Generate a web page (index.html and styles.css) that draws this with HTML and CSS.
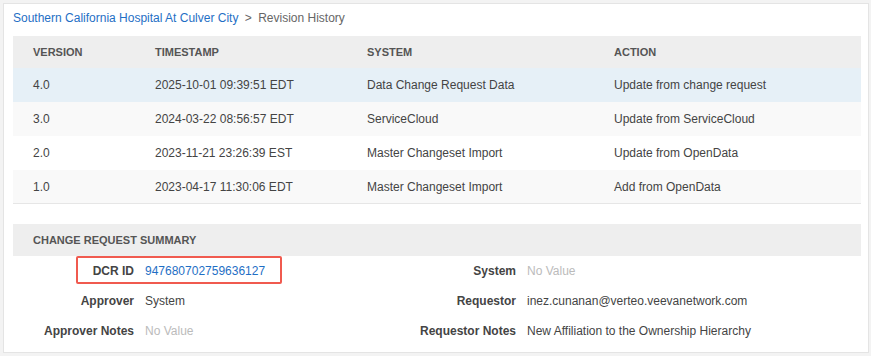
FILE: index.html
```html
<!DOCTYPE html>
<html>
<head>
<meta charset="utf-8">
<link rel="stylesheet" href="styles.css">
</head>
<body>
<div class="card">
  <div class="crumbs">
    <a class="crumb-link" href="#">Southern California Hospital At Culver City</a>
    <span class="crumb-sep">&gt;</span>
    <span class="crumb-current">Revision History</span>
  </div>
  <table class="history">
    <colgroup>
      <col class="c1"><col class="c2"><col class="c3"><col class="c4">
    </colgroup>
    <thead>
      <tr><th>VERSION</th><th>TIMESTAMP</th><th>SYSTEM</th><th>ACTION</th></tr>
    </thead>
    <tbody>
      <tr class="selected"><td>4.0</td><td>2025-10-01 09:39:51 EDT</td><td>Data Change Request Data</td><td>Update from change request</td></tr>
      <tr class="alt"><td>3.0</td><td>2024-03-22 08:56:57 EDT</td><td>ServiceCloud</td><td>Update from ServiceCloud</td></tr>
      <tr><td>2.0</td><td>2023-11-21 23:26:39 EST</td><td>Master Changeset Import</td><td>Update from OpenData</td></tr>
      <tr class="alt last"><td>1.0</td><td>2023-04-17 11:30:06 EDT</td><td>Master Changeset Import</td><td>Add from OpenData</td></tr>
    </tbody>
  </table>
  <section class="summary">
    <div class="summary-head">CHANGE REQUEST SUMMARY</div>
    <div class="summary-grid">
      <div class="label">DCR ID</div><div class="value"><a class="link" href="#">947680702759636127</a></div>
      <div class="label">System</div><div class="value empty">No Value</div>
      <div class="label">Approver</div><div class="value">System</div>
      <div class="label">Requestor</div><div class="value">inez.cunanan@verteo.veevanetwork.com</div>
      <div class="label">Approver Notes</div><div class="value empty">No Value</div>
      <div class="label">Requestor Notes</div><div class="value">New Affiliation to the Ownership Hierarchy</div>
    </div>
    <div class="highlight-box"></div>
  </section>
</div>
</body>
</html>
```
FILE: styles.css
```css
html, body {
  margin: 0;
  padding: 0;
}
body {
  background: #f3f3f3;
  font-family: "Liberation Sans", Arial, Helvetica, sans-serif;
  font-size: 12px;
  color: #444;
  padding: 3px 2px 3px 3px;
  width: 871px;
  height: 356px;
  box-sizing: border-box;
}
.card {
  background: #fff;
  border: 1px solid #e4e4e4;
  width: 866px;
  height: 350px;
  box-sizing: border-box;
  padding: 0 6px 0 9px;
}
.crumbs {
  padding-top: 4px;
  height: 32px;
  line-height: 20px;
  box-sizing: border-box;
  color: #666;
}
.crumb-link {
  color: #1f6fc5;
  text-decoration: none;
}
.crumb-sep {
  margin: 0 3px;
  color: #666;
}
.history {
  width: 848px;
  border-collapse: collapse;
  table-layout: fixed;
}
.c1 { width: 122px; }
.c2 { width: 212px; }
.c3 { width: 247px; }
.c4 { width: 267px; }
.history th {
  background: #eeeeee;
  height: 32px;
  padding: 0 0 0 20px;
  text-align: left;
  font-size: 11px;
  font-weight: bold;
  color: #555;
}
.history td {
  height: 34px;
  padding: 0 0 0 20px;
  color: #444;
}
.history tr.selected td { background: #e6f0f7; }
.history tr.alt td { background: #f9f9f9; }
.history tr.last td { border-bottom: 1px solid #e6e6e6; height: 33px; }
.summary {
  position: relative;
  margin-top: 20px;
  width: 848px;
}
.summary-head {
  background: #eeeeee;
  height: 32px;
  line-height: 32px;
  padding-left: 20px;
  font-size: 11px;
  font-weight: bold;
  color: #555;
}
.summary-grid {
  display: grid;
  grid-template-columns: 121px 260px 100px 1fr;
  column-gap: 11px;
  grid-auto-rows: 30px;
  align-items: center;
  padding-top: 0;
}
.label {
  text-align: right;
  font-weight: bold;
  color: #444;
  white-space: nowrap;
}
.value {
  color: #444;
  white-space: nowrap;
}
.value.empty { color: #bbb; }
.link {
  color: #1f6fc5;
  text-decoration: none;
}
.highlight-box {
  position: absolute;
  left: 63px;
  top: 32px;
  width: 206px;
  height: 28px;
  border: 2px solid #f05a4f;
  border-radius: 2px;
  box-sizing: border-box;
}
```
